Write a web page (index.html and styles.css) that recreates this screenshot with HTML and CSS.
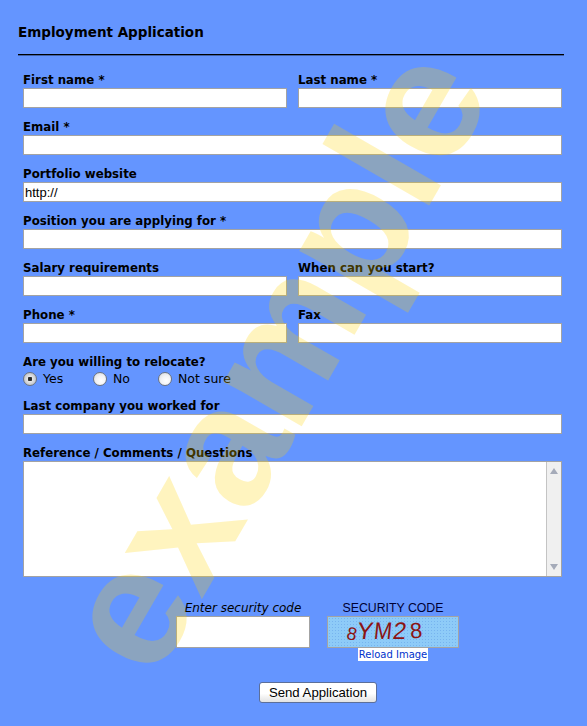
FILE: index.html
```html
<!DOCTYPE html>
<html lang="en">
<head>
    <meta charset="UTF-8">
    <title>Employment Application</title>
    <link rel="stylesheet" href="styles.css">
</head>
<body>
    <form class="application">
        <h2 class="form-title">Employment Application</h2>

        <div class="fields">
            <div class="field">
                <label for="firstName">First name *</label>
                <input type="text" id="firstName" class="input-field">
            </div>
            <div class="field">
                <label for="lastName">Last name *</label>
                <input type="text" id="lastName" class="input-field">
            </div>
            <div class="field field-wide">
                <label for="email">Email *</label>
                <input type="text" id="email" class="input-field">
            </div>
            <div class="field field-wide">
                <label for="portfolio">Portfolio website</label>
                <input type="text" id="portfolio" class="input-field" value="http://">
            </div>
            <div class="field field-wide">
                <label for="position">Position you are applying for *</label>
                <input type="text" id="position" class="input-field">
            </div>
            <div class="field">
                <label for="salary">Salary requirements</label>
                <input type="text" id="salary" class="input-field">
            </div>
            <div class="field">
                <label for="startDate">When can you start?</label>
                <input type="text" id="startDate" class="input-field">
            </div>
            <div class="field">
                <label for="phone">Phone *</label>
                <input type="text" id="phone" class="input-field">
            </div>
            <div class="field">
                <label for="fax">Fax</label>
                <input type="text" id="fax" class="input-field">
            </div>
            <div class="field field-wide relocate">
                <span class="field-label">Are you willing to relocate?</span>
                <div class="radio-row">
                    <label class="radio radio-yes"><input type="radio" name="relocate" checked> Yes</label>
                    <label class="radio radio-no"><input type="radio" name="relocate"> No</label>
                    <label class="radio"><input type="radio" name="relocate"> Not sure</label>
                </div>
            </div>
            <div class="field field-wide">
                <label for="company">Last company you worked for</label>
                <input type="text" id="company" class="input-field">
            </div>
            <div class="field field-wide">
                <label for="comments">Reference / Comments / Questions</label>
                <div class="comments-box">
                    <textarea id="comments" class="comments"></textarea>
                    <div class="scrollbar">
                        <span class="arrow arrow-up"></span>
                        <span class="arrow arrow-down"></span>
                    </div>
                </div>
            </div>
        </div>

        <div class="security">
            <div class="security-col">
                <label for="code" class="code-label">Enter security code</label>
                <input type="text" id="code" class="code-input">
            </div>
            <div class="security-col captcha-col">
                <span class="captcha-title">SECURITY CODE</span>
                <div class="captcha">
                    <span class="c1">8</span><span class="c2">Y</span><span class="c3">M</span><span class="c4">2</span><span class="c5">8</span>
                </div>
                <a href="#" class="reload">Reload Image</a>
            </div>
        </div>

        <div class="actions">
            <button type="button" class="btn-send">Send Application</button>
        </div>
    </form>

    <!-- Sample watermark over the form -->
    <div class="watermark">example</div>
</body>
</html>
```

FILE: styles.css
```css
html {
    height: 100%;
}

body {
    margin: 0;
    min-height: 726px;
    height: 726px;
    position: relative;
    overflow: hidden;
    background-color: #6495ff;
    font-family: "DejaVu Sans", Verdana, sans-serif;
    color: #000;
}

.application {
    padding: 23px 23px 0 18px;
}

.form-title {
    margin: 0;
    padding-bottom: 12px;
    height: 19px;
    font-size: 13.5px;
    line-height: 19px;
    font-weight: bold;
    border-bottom: 1px solid #000;
    box-shadow: 0 1px 0 rgba(0, 0, 0, 0.35);
}

.fields {
    display: grid;
    grid-template-columns: 264px 264px;
    column-gap: 11px;
    row-gap: 9px;
    padding: 15px 0 0 5px;
}

.field-wide {
    grid-column: 1 / 3;
}

.field label,
.field-label {
    display: block;
    height: 18px;
    font-size: 11.8px;
    line-height: 20px;
    font-weight: bold;
}

.input-field {
    display: block;
    width: 100%;
    height: 20px;
    margin: 0;
    padding: 0 1px;
    box-sizing: border-box;
    border: 1px solid #a3a3a3;
    background-color: #fff;
    font-family: "Liberation Sans", Arial, sans-serif;
    font-size: 13px;
}

.relocate {
    margin-bottom: -1px;
}

.radio-row {
    display: flex;
    height: 18px;
    align-items: center;
}

.field .radio {
    display: flex;
    align-items: center;
    height: 18px;
    font-size: 12.5px;
    line-height: 18px;
    font-weight: normal;
}

.radio-yes {
    width: 70px;
}

.radio-no {
    width: 65px;
}

.radio input {
    appearance: none;
    -webkit-appearance: none;
    width: 14px;
    height: 14px;
    margin: 0 6px 0 0;
    border-radius: 50%;
    border: 1px solid #6d7480;
    box-sizing: border-box;
    background: radial-gradient(circle at 60% 65%, #fff 0, #f2f3f5 45%, #d4d7dc 100%);
}

.radio input:checked {
    background: radial-gradient(circle, #222 0, #333 24%, #e4e5e8 30%, #b0b3b9 100%);
}

.comments-box {
    display: flex;
    height: 116px;
    box-sizing: border-box;
    border: 1px solid #a3a3a3;
    background-color: #fff;
}

.comments {
    flex: 1;
    margin: 0;
    padding: 1px;
    border: none;
    outline: none;
    resize: none;
    background-color: #fff;
}

.scrollbar {
    width: 15px;
    display: flex;
    flex-direction: column;
    justify-content: space-between;
    align-items: center;
    padding: 6px 0;
    box-sizing: border-box;
    border-left: 1px solid #c4c4c4;
    background-color: #f0f0f0;
}

.arrow {
    width: 0;
    height: 0;
    border-left: 4px solid transparent;
    border-right: 4px solid transparent;
}

.arrow-up {
    border-bottom: 6px solid #a5abb9;
}

.arrow-down {
    border-top: 6px solid #a5abb9;
}

.security {
    display: flex;
    padding: 22px 0 0 158px;
}

.security-col {
    display: flex;
    flex-direction: column;
}

.code-label {
    height: 17px;
    font-size: 12px;
    line-height: 19px;
    font-style: italic;
    text-align: center;
}

.code-input {
    width: 134px;
    height: 32px;
    margin: 0;
    box-sizing: border-box;
    border: 1px solid #a3a3a3;
    background-color: #fff;
}

.captcha-col {
    margin-left: 17px;
    align-items: center;
}

.captcha-title {
    height: 17px;
    font-family: "Liberation Sans", Arial, sans-serif;
    font-size: 12.3px;
    line-height: 19px;
    color: #000033;
}

.captcha {
    display: flex;
    width: 132px;
    height: 32px;
    padding-left: 19px;
    box-sizing: border-box;
    border: 1px solid #a3a3a3;
    background-color: #8ecbf8;
    background-image: radial-gradient(circle, rgba(110, 170, 235, 0.7) 0.7px, transparent 0.8px);
    background-size: 3px 3px;
    font-family: "Liberation Sans", Arial, sans-serif;
    font-size: 24px;
    line-height: 28px;
    color: #8b1414;
}

.captcha span {
    display: inline-block;
}

.c1 {
    font-size: 18px;
    margin-top: 3px;
    transform: rotate(12deg);
}

.c2 {
    margin-left: 0;
    transform: skewX(-8deg);
}

.c3 {
    margin-left: 0;
    transform: skewX(-6deg) scaleX(0.9);
}

.c4 {
    margin-left: 0;
    transform: skewX(-8deg);
}

.c5 {
    margin-left: 4px;
    font-size: 22px;
    transform: rotate(-4deg);
}

.reload {
    display: block;
    padding: 0 1px;
    height: 13px;
    background-color: #fff;
    font-size: 10px;
    line-height: 13px;
    color: #0033cc;
    text-decoration: none;
}

.actions {
    padding: 21px 0 0 241px;
}

.btn-send {
    display: block;
    width: 118px;
    height: 21px;
    padding: 0;
    box-sizing: border-box;
    border: 1px solid #5c6f9a;
    border-radius: 3px;
    background: linear-gradient(#fff, #fff 55%, #e2e2e2);
    font-family: "Liberation Sans", Arial, sans-serif;
    font-size: 13.2px;
    color: #000;
}

.watermark {
    position: absolute;
    left: 273px;
    top: 358px;
    transform: translate(-50%, -50%) rotate(-60deg);
    font-family: "Liberation Sans", Arial, sans-serif;
    font-size: 170px;
    line-height: 1;
    font-weight: bold;
    white-space: nowrap;
    color: rgba(255, 211, 0, 0.25);
    pointer-events: none;
}
```
